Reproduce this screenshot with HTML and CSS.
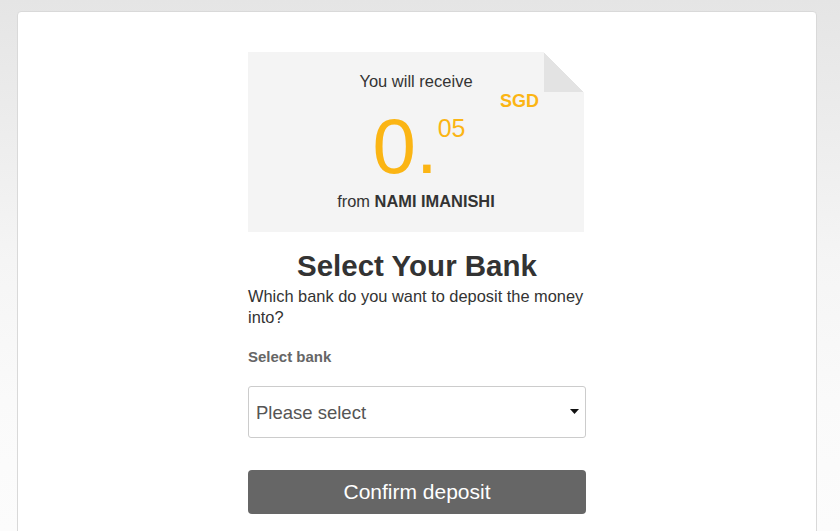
FILE: index.html
```html
<!DOCTYPE html>
<html lang="en">
<head>
<meta charset="utf-8">
<title>Select Your Bank</title>
<link rel="stylesheet" href="styles.css">
</head>
<body>
<div class="card">
  <div class="column">
    <div class="receipt">
      <div class="receive-label">You will receive</div>
      <div class="currency">SGD</div>
      <div class="amount"><span class="amount-int">0.</span><span class="amount-dec">05</span></div>
      <div class="from">from <strong>NAMI IMANISHI</strong></div>
    </div>
    <h1 class="title">Select Your Bank</h1>
    <p class="lead">Which bank do you want to deposit the money into?</p>
    <label class="field-label" for="bank">Select bank</label>
    <div class="select-wrap">
      <select id="bank" class="select">
        <option>Please select</option>
      </select>
      <svg class="caret" width="9" height="5" viewBox="0 0 9 5"><path d="M0 0H9L4.5 5Z" fill="#111"/></svg>
    </div>
    <button class="confirm" type="button">Confirm deposit</button>
  </div>
</div>
</body>
</html>
```
FILE: styles.css
```css
html, body {
  margin: 0;
  padding: 0;
  height: 100%;
}
body {
  font-family: "Liberation Sans", Arial, sans-serif;
  color: #333;
  background: linear-gradient(to bottom, #e5e5e5 0, #ececec 120px, #f5f5f5 260px, #fafafa 400px, #fcfcfc 531px);
  overflow: hidden;
}
.card {
  box-sizing: border-box;
  width: 800px;
  min-height: 540px;
  margin: 11px 0 0 17px;
  background: #fff;
  border: 1px solid #d9d9d9;
  border-radius: 4px;
  padding-top: 40px;
}
.column {
  width: 338px;
  margin: 0 auto;
  display: flex;
  flex-direction: column;
}
.receipt {
  position: relative;
  box-sizing: border-box;
  width: 336px;
  height: 180px;
  background: #f4f4f4;
  padding-top: 20px;
  text-align: center;
}
.receipt::before {
  content: "";
  position: absolute;
  top: 0;
  right: 0;
  width: 40px;
  height: 40px;
  background: linear-gradient(45deg, #e3e3e3 50%, #fff 50%);
}
.receive-label {
  font-size: 16.5px;
  line-height: 18px;
}
.currency {
  font-size: 18px;
  font-weight: bold;
  color: #fbb514;
  text-align: right;
  line-height: 18px;
  margin-top: 2px;
  padding-right: 45px;
}
.amount {
  color: #fbb514;
  height: 66px;
  margin-top: 3px;
  line-height: 1;
  padding-left: 6px;
}
.amount-int {
  font-size: 78px;
  line-height: 66px;
  vertical-align: top;
  display: inline-block;
  height: 66px;
}
.amount-dec {
  font-size: 25px;
  line-height: 25px;
  vertical-align: top;
  display: inline-block;
  margin-top: 3px;
}
.from {
  margin-top: 13px;
  font-size: 16.4px;
  line-height: 18px;
}
.from strong {
  font-weight: bold;
}
.title {
  margin: 18px 0 0;
  font-size: 29.5px;
  line-height: 32px;
  font-weight: bold;
  text-align: center;
  color: #333;
}
.lead {
  margin: 4px 0 0;
  font-size: 16.4px;
  line-height: 21px;
  color: #333;
}
.field-label {
  margin-top: 20px;
  font-size: 15px;
  font-weight: bold;
  line-height: 18px;
  color: #666;
}
.select-wrap {
  position: relative;
  margin-top: 20px;
}
.select {
  display: block;
  box-sizing: border-box;
  width: 100%;
  height: 52px;
  margin: 0;
  padding: 0 30px 0 7px;
  font-family: "Liberation Sans", Arial, sans-serif;
  font-size: 18.5px;
  color: #555;
  background: #fff;
  border: 1px solid #ccc;
  border-radius: 3px;
  -webkit-appearance: none;
  appearance: none;
}
.caret {
  position: absolute;
  right: 7px;
  top: 23px;
}
.confirm {
  margin-top: 32px;
  box-sizing: border-box;
  width: 100%;
  height: 44px;
  border: 0;
  border-radius: 4px;
  background: #666;
  color: #fff;
  font-family: "Liberation Sans", Arial, sans-serif;
  font-size: 21px;
  padding: 0;
}
```
